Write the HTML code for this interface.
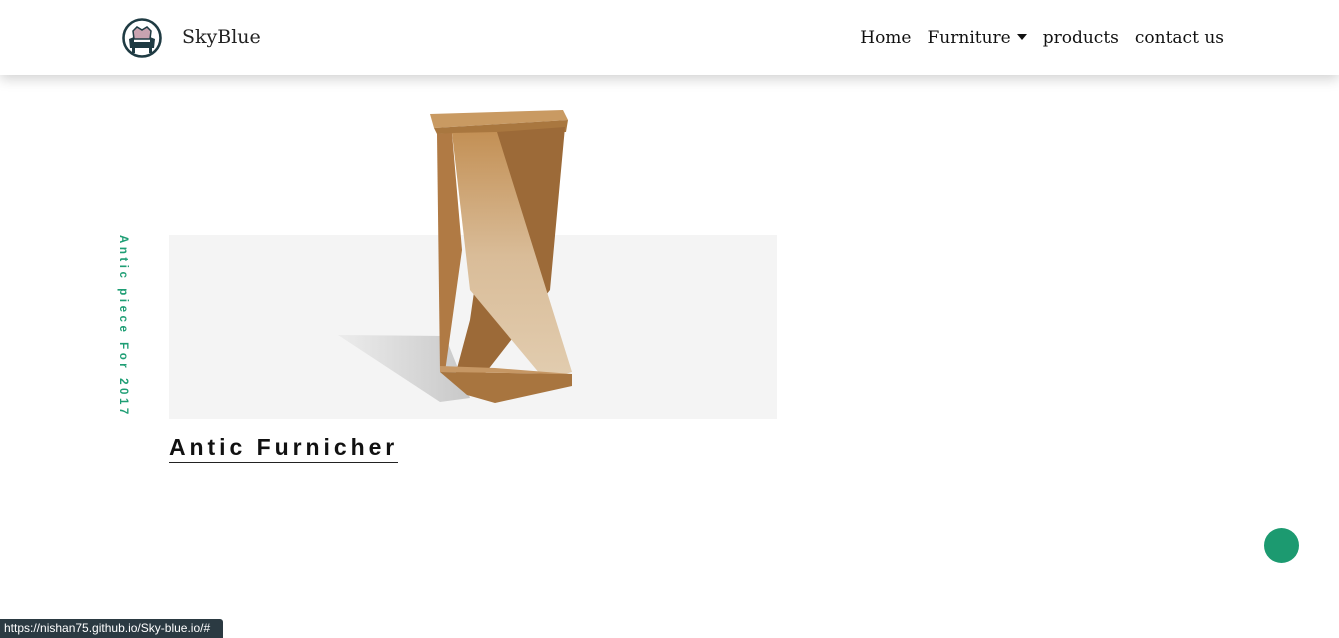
<!DOCTYPE html>
<html><head><meta charset="utf-8"><style>
*{margin:0;padding:0;box-sizing:border-box}
body{width:1339px;height:638px;overflow:hidden;background:#fff;position:relative;font-family:"Liberation Sans",sans-serif}
.nav{position:absolute;left:0;top:0;width:1339px;height:75px;background:#fff;box-shadow:0 4px 12px rgba(0,0,0,.18);z-index:2}
.brand{position:absolute;left:182px;top:26px;font-family:"DejaVu Serif",serif;font-size:19px;color:#222}
.menu{position:absolute;right:115px;top:28px;font-family:"DejaVu Serif",serif;font-size:17px;color:#111;display:flex;gap:16px}
.caret{display:inline-block;border-left:5px solid transparent;border-right:5px solid transparent;border-top:6px solid #111;vertical-align:3px;margin-left:6px}
.box{position:absolute;left:169px;top:235px;width:608px;height:184px;background:#f4f4f4}
.vt{position:absolute;left:117px;top:235px;writing-mode:vertical-rl;color:#1e9e74;font-size:11.5px;font-weight:bold;letter-spacing:3.55px}
h2{position:absolute;left:169px;top:434px;font-size:23px;font-weight:bold;letter-spacing:3.95px;color:#111;border-bottom:1.5px solid #222;padding-bottom:1px;line-height:27px}
.dot{position:absolute;left:1264px;top:528px;width:35px;height:35px;border-radius:50%;background:#1c9a70}
.status{position:absolute;left:0;top:619px;width:223px;height:19px;background:#2b3a42;color:#fff;font-size:12px;line-height:19px;padding-left:4px;border-top-right-radius:3px}
</style></head><body>
<div class="nav">
<svg style="position:absolute;left:121px;top:17px" width="42" height="42" viewBox="0 0 42 42">
<circle cx="21" cy="21" r="18.5" fill="none" stroke="#1f3b43" stroke-width="2.6"/>
<path d="M12 14 L16 10 L21 13 L26 10 L30 14 L29 22 L13 22 Z" fill="#c9a3b0" stroke="#1f3b43" stroke-width="1.5"/>
<path d="M8 22 L13 20 L13 25 L29 25 L29 20 L34 22 L33 31 L9 31 Z" fill="#1f3b43"/>
<rect x="11" y="31" width="3" height="5" fill="#1f3b43"/><rect x="28" y="31" width="3" height="5" fill="#1f3b43"/>
</svg>
<div class="brand">SkyBlue</div>
<div class="menu"><span>Home</span><span>Furniture<span class="caret"></span></span><span>products</span><span>contact us</span></div>
</div>
<div class="vt">Antic piece For 2017</div>
<div class="box"></div>
<svg style="position:absolute;left:330px;top:100px" width="260" height="310" viewBox="330 100 260 310">
<defs><linearGradient id="sh" x1="0" x2="1"><stop offset="0" stop-color="#ececec"/><stop offset="1" stop-color="#c8c8c8"/></linearGradient>
<linearGradient id="fp" x1="0" y1="0" x2="0" y2="1"><stop offset="0" stop-color="#c39055"/><stop offset=".5" stop-color="#d9bc98"/><stop offset="1" stop-color="#e2cdb0"/></linearGradient></defs>
<polygon points="338,335 445,336 470,398 440,402" fill="url(#sh)"/>
<polygon points="430,114 563,110 568,120 434,128" fill="#c99a62"/>
<polygon points="434,128 568,120 566,132 437,134" fill="#a9773f"/>
<polygon points="497,132 565,127 550,290 480,380 455,376 470,320" fill="#9c6a38"/>
<polygon points="437,134 452,133 462,250 445,372 440,372" fill="#b07a44"/>
<polygon points="452,133 497,132 572,372 545,380 470,290" fill="url(#fp)"/>
<polygon points="440,372 572,374 572,386 495,403 467,395" fill="#a8753f"/>
<polygon points="440,366 495,368 572,374 440,372" fill="#c69764"/>
</svg>
<h2>Antic Furnicher</h2>
<div class="dot"></div>
<div class="status">https://nishan75.github.io/Sky-blue.io/#</div>
</body></html>
